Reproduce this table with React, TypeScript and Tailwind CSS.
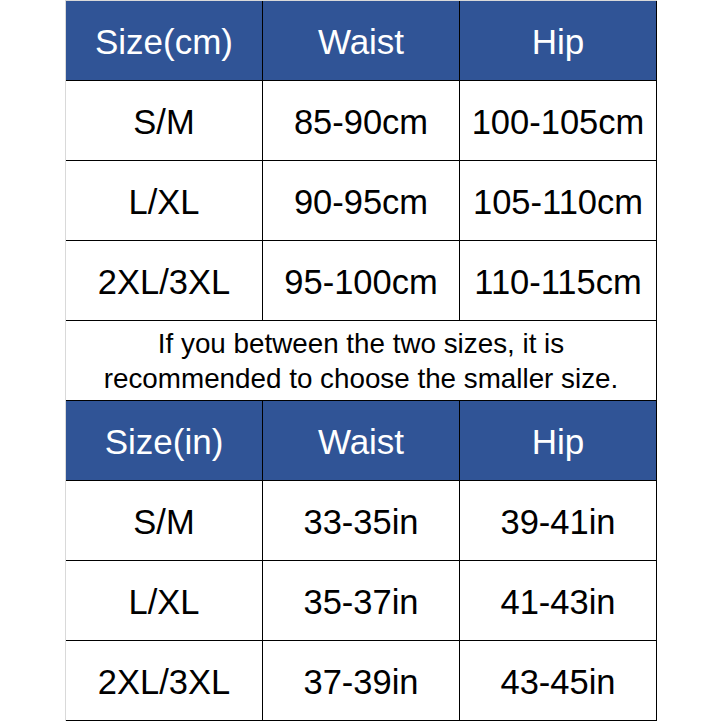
import React from "react";

const Header = ({ label }: { label: string }) => (
  <div className="grid grid-cols-[197px_197px_197px] h-[80px] border-b border-black bg-[#305496] text-white">
    {[label, "Waist", "Hip"].map((t, i) => (
      <div key={i} className="flex items-center justify-center border-r border-black pt-[4px] text-[35px]">
        {t}
      </div>
    ))}
  </div>
);

const Row = ({ cells }: { cells: string[] }) => (
  <div className="grid grid-cols-[197px_197px_197px] h-[80px] border-b border-black bg-white text-black">
    {cells.map((t, i) => (
      <div key={i} className="flex items-center justify-center border-r border-black pt-[4px] text-[34.5px]">
        {t}
      </div>
    ))}
  </div>
);

export default function App() {
  return (
    <div className="w-[721px] h-[721px] bg-white" style={{ fontFamily: '"Liberation Sans", Arial, sans-serif' }}>
      <div className="ml-[65px] w-[592px] border-l border-t border-l-[#d9d9d9] border-t-[#d9d9d9]">
        <Header label="Size(cm)" />
        <Row cells={["S/M", "85-90cm", "100-105cm"]} />
        <Row cells={["L/XL", "90-95cm", "105-110cm"]} />
        <Row cells={["2XL/3XL", "95-100cm", "110-115cm"]} />
        <div className="h-[80px] border-b border-r border-black flex flex-col items-center justify-center text-[27.8px] leading-[35px] text-black text-center">
          <div>If you between the two sizes, it is</div>
          <div>recommended to choose the smaller size.</div>
        </div>
        <Header label="Size(in)" />
        <Row cells={["S/M", "33-35in", "39-41in"]} />
        <Row cells={["L/XL", "35-37in", "41-43in"]} />
        <Row cells={["2XL/3XL", "37-39in", "43-45in"]} />
      </div>
    </div>
  );
}
